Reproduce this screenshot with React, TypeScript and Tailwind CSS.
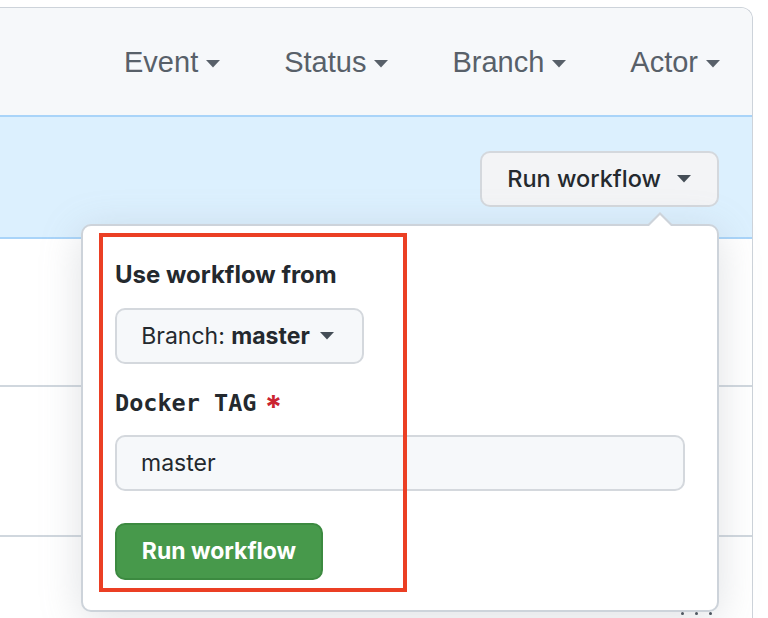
import React from "react";

function Caret({ className = "" }: { className?: string }) {
  return (
    <svg width="14" height="8" viewBox="0 0 14 8" className={className} aria-hidden>
      <path d="M0 0h14L7 7.5z" fill="currentColor" />
    </svg>
  );
}

function Filter({ label }: { label: string }) {
  return (
    <div className="flex items-center gap-[8px] text-[29px] text-[#586069]">
      <span>{label}</span>
      <Caret className="mt-[3px]" />
    </div>
  );
}

export default function App() {
  return (
    <div
      className="w-[768px] h-[618px] overflow-hidden bg-white pt-[7px]"
      style={{ fontFamily: "Inter, 'Liberation Sans', sans-serif" }}
    >
      <div className="w-[753px] h-[640px] border-t border-r border-[#cdd3da] rounded-tr-[12px] flex flex-col">
        {/* filters header */}
        <header
          className="h-[107px] shrink-0 bg-[#f6f8fa] rounded-tr-[12px] flex items-center justify-end gap-[64px] pr-[32px] pt-[2px]"
          style={{ fontFamily: "'Liberation Sans', Arial, sans-serif" }}
        >
          <Filter label="Event" />
          <Filter label="Status" />
          <Filter label="Branch" />
          <Filter label="Actor" />
        </header>

        {/* run workflow banner */}
        <section className="h-[124px] shrink-0 bg-[#dcf0fe] border-t-[2px] border-b-[2px] border-[#a9d4f9] flex justify-end pt-[34px] pr-[33px]">
          <div className="relative h-[56px]">
            <button className="h-[56px] flex items-center gap-[16px] pl-[25px] pr-[26px] rounded-[10px] border-[2px] border-[#d4d8dd] bg-[#f3f4f6] text-[23.5px] font-medium text-[#24292e]">
              Run workflow
              <Caret className="text-[#444d56]" />
            </button>

            {/* popover */}
            <div className="absolute right-0 top-full mt-[17px] w-[638px] h-[388px] bg-white border-[2px] border-[#cdd3da] rounded-[10px] shadow-[0_8px_40px_rgba(140,149,159,0.28)] z-10">
              <div className="absolute -top-[14px] right-[43px] w-0 h-0 border-x-[14px] border-x-transparent border-b-[14px] border-b-[#cdd3da]" />
              <div className="absolute -top-[11px] right-[45px] w-0 h-0 border-x-[12px] border-x-transparent border-b-[12px] border-b-white" />

              <div className="flex flex-col items-start pl-[32px] pr-[32px] pt-[35px]">
                <div className="text-[24px] font-bold text-[#24292e] leading-[28px]">Use workflow from</div>

                <button className="mt-[19px] h-[56px] w-[249px] flex items-center justify-center gap-[10px] pr-[4px] rounded-[10px] border-[2px] border-[#d4d8dd] bg-[#f6f8fa] text-[23px] text-[#24292e]">
                  <span>
                    Branch: <span className="font-bold">master</span>
                  </span>
                  <Caret className="text-[#444d56]" />
                </button>

                <div className="mt-[19px] flex items-center gap-[8px] leading-[30px]">
                  <span
                    className="text-[23.5px] font-bold text-[#24292e]"
                    style={{ fontFamily: "'DejaVu Sans Mono', 'Liberation Mono', monospace" }}
                  >
                    Docker TAG
                  </span>
                  <span className="text-[32px] font-bold text-[#cb2431] leading-[30px] mt-[10px]">*</span>
                </div>

                <div className="mt-[12px] w-full h-[56px] flex items-center pl-[24px] rounded-[10px] border-[2px] border-[#d4d8dd] bg-[#f6f8fa] text-[23px] text-[#24292e]">
                  master
                </div>

                <button className="mt-[32px] h-[57px] w-[208px] flex items-center justify-center rounded-[10px] border-[2px] border-[#3c8a40] bg-[#47994b] text-[23px] font-bold text-white">
                  Run workflow
                </button>
              </div>

              {/* annotation */}
              <div className="absolute left-[16px] top-[7px] w-[308px] h-[359px] border-[4px] border-[#eb3f24] pointer-events-none" />
            </div>
          </div>
        </section>

        {/* rows */}
        <div className="h-[148px] shrink-0 border-b-[2px] border-[#d0d7de]" />
        <div className="h-[150px] shrink-0 border-b-[2px] border-[#d0d7de]" />
        <div className="flex-1 flex justify-end pr-[40px] pt-[75px]">
          <div className="flex gap-[11px]">
            <span className="w-[3px] h-[3px] rounded-full bg-[#444d56]" />
            <span className="w-[3px] h-[3px] rounded-full bg-[#444d56]" />
            <span className="w-[3px] h-[3px] rounded-full bg-[#444d56]" />
          </div>
        </div>
      </div>
    </div>
  );
}
